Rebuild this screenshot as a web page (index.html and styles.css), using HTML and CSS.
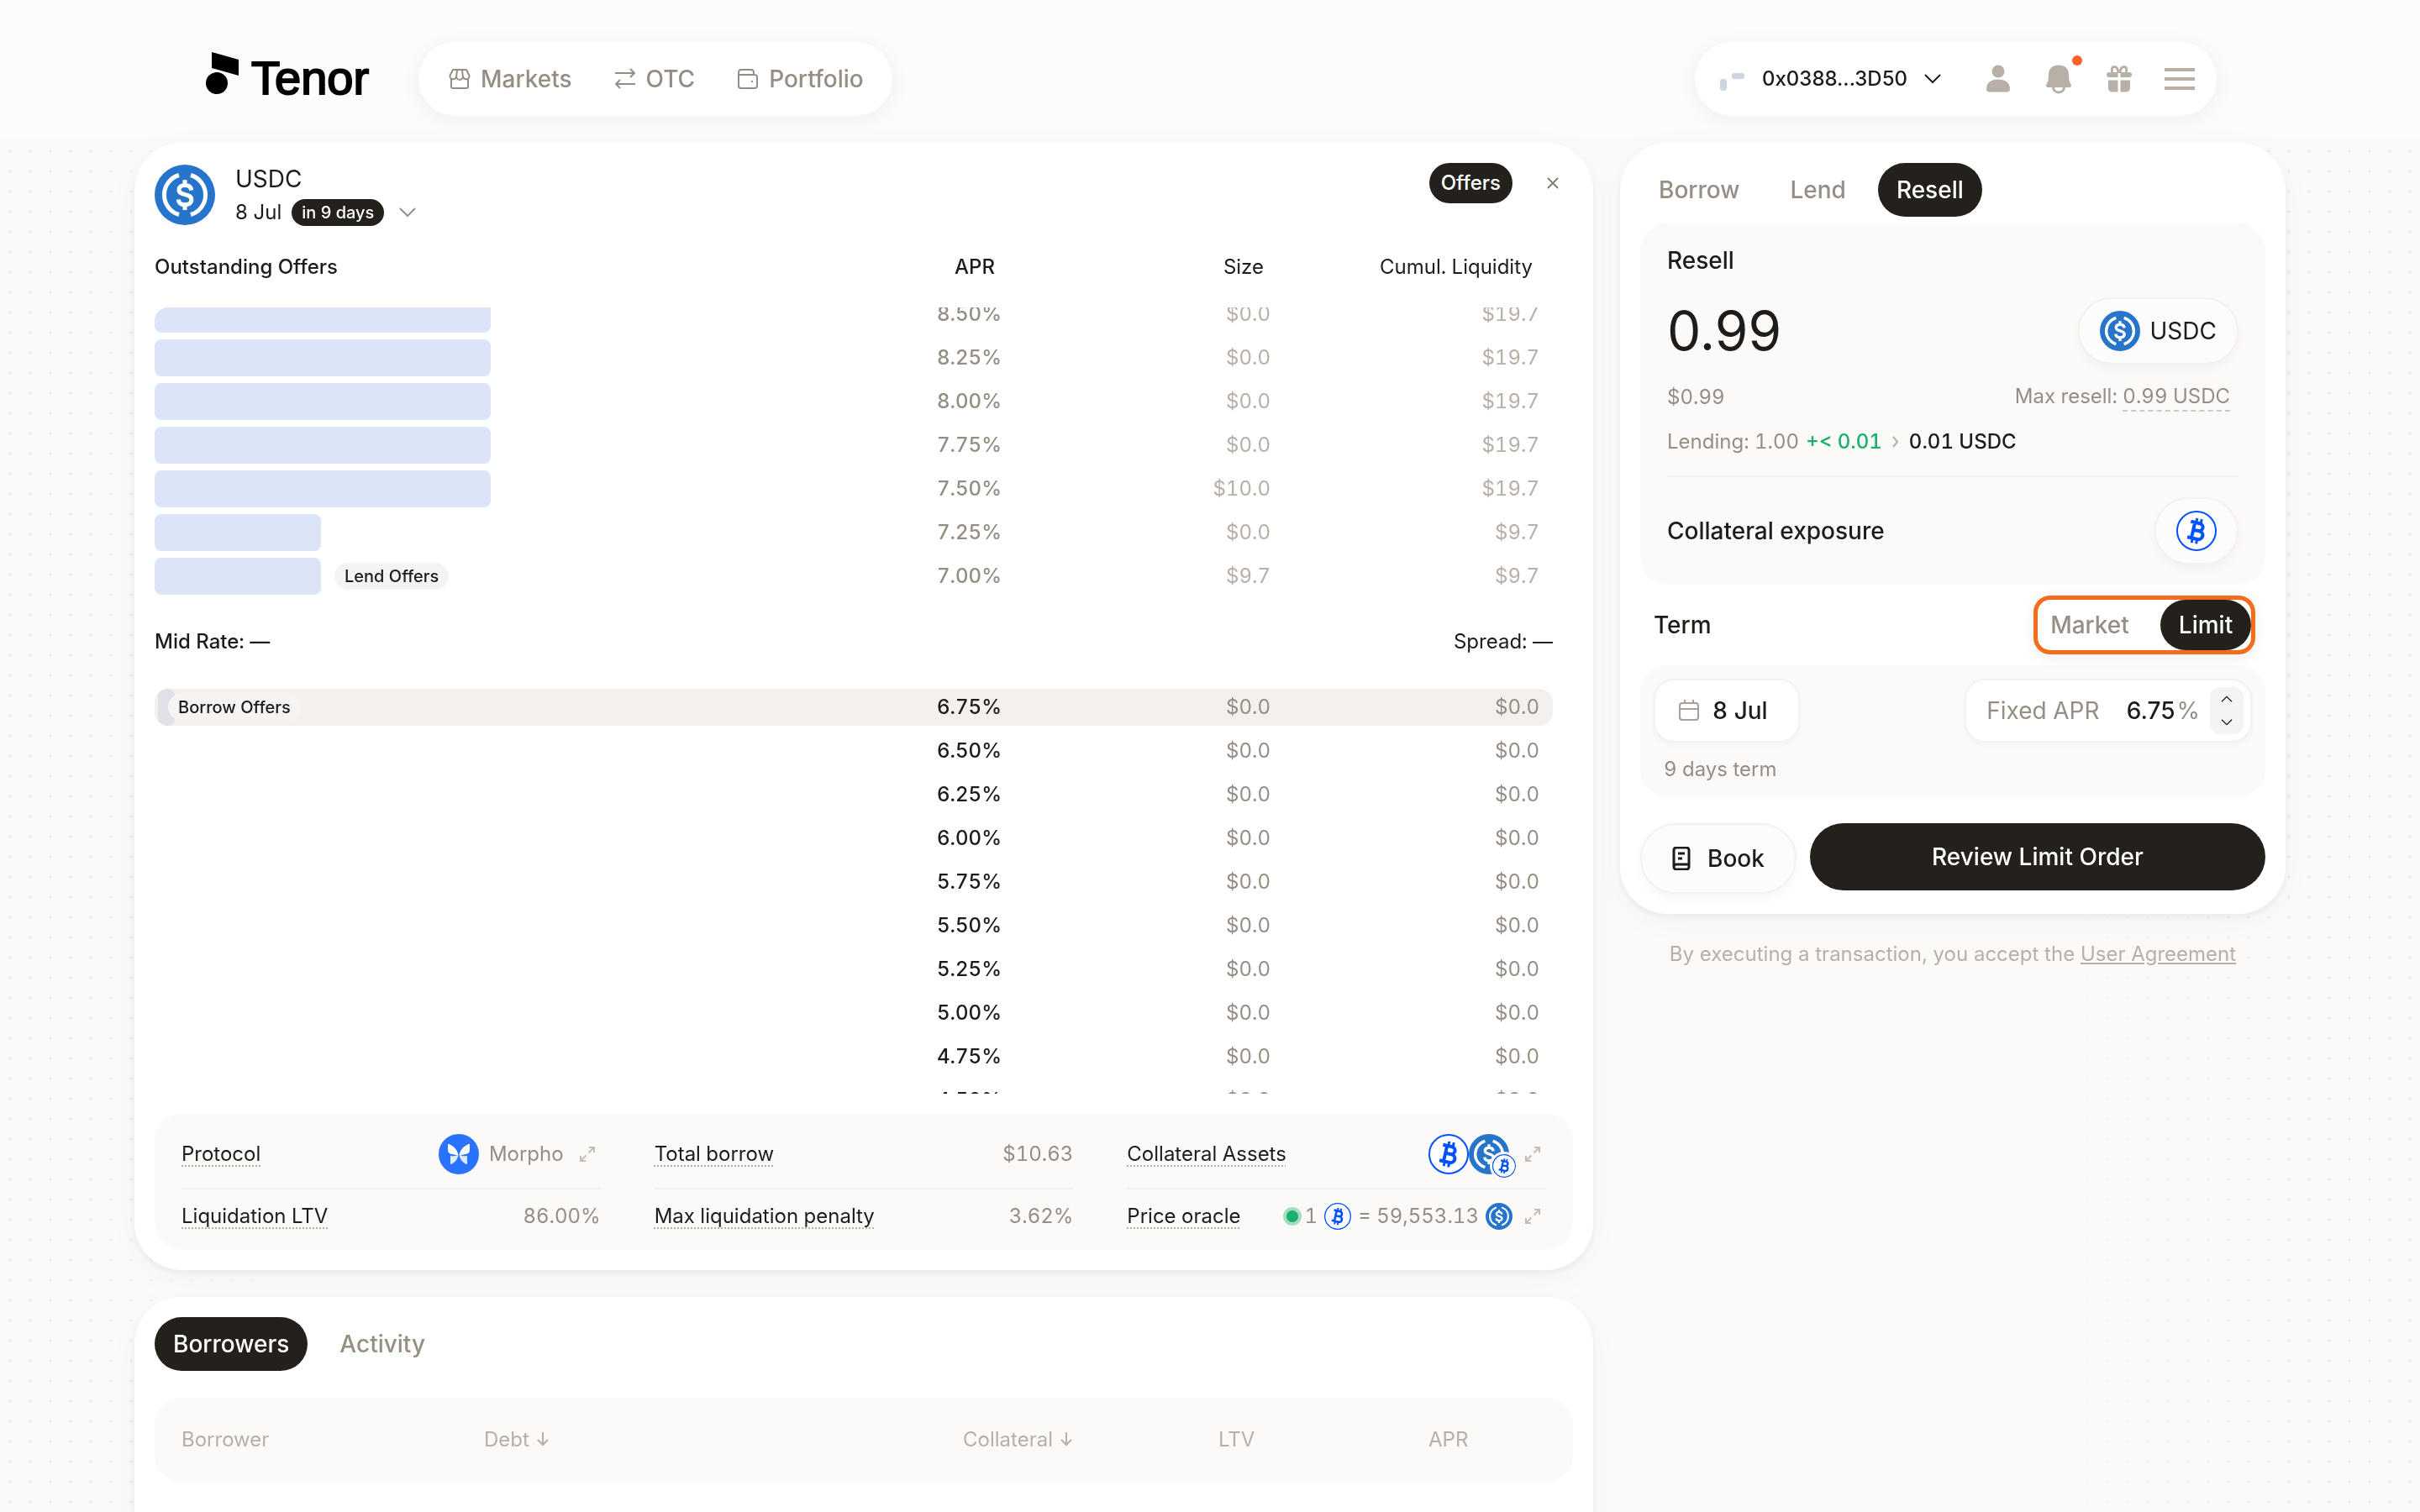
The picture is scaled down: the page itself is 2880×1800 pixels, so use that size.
FILE: index.html
```html
<!DOCTYPE html>
<html lang="en">
<head>
    <meta charset="UTF-8">
    <meta name="viewport" content="width=device-width, initial-scale=1.0">
    <title>Tenor - USDC 8 Jul</title>
    <link rel="stylesheet" href="styles.css">
</head>
<body>
    <!-- shared icons -->
    <svg class="sprite" aria-hidden="true">
        <symbol id="usdc" viewBox="0 0 72 72">
            <circle cx="36" cy="36" r="36" fill="#2775ca"/>
            <g fill="none" stroke="#fff" stroke-width="5">
                <path d="M29 12.5a24.5 24.5 0 0 0 0 47M43 12.5a24.5 24.5 0 0 1 0 47"/>
                <path d="M43.7 30.5c-.4-3.9-3.2-6-7.5-6-4.5 0-7.2 2.2-7.2 5.5 0 7.9 14.8 3.4 14.8 11.8 0 3.8-3 6-7.6 6-4.9 0-7.6-2.3-8-6.3M36 18.3v6.2M36 47.8V54"/>
            </g>
        </symbol>
        <symbol id="btc" viewBox="0 0 48 48">
            <circle cx="24" cy="24" r="23" fill="#fff" stroke="#0052ff" stroke-width="2"/>
            <g transform="rotate(13 24 24)" fill="none" stroke="#0052ff" stroke-width="4">
                <path d="M15 14.5h11a4.5 4.5 0 0 1 0 9h-6M20 23.5h7.5a5 5 0 0 1 0 10H15M20 14v20"/>
                <path d="M21.5 9v5M27 9v5M21.5 34v5M27 34v5" stroke-width="3"/>
            </g>
        </symbol>
        <symbol id="expand" viewBox="0 0 20 20">
            <path d="M12 2h6v6M18 2l-6.500 6.500M8 18H2v-6M2 18l6.500-6.500" fill="none" stroke="currentColor" stroke-width="2"/>
        </symbol>
        <symbol id="chevron" viewBox="0 0 20 12">
            <path d="M1 1l9 9 9-9" fill="none" stroke="currentColor" stroke-width="2"/>
        </symbol>
        <symbol id="arrow-down" viewBox="0 0 14 18">
            <path d="M7 1v15M1 10l6 6 6-6" fill="none" stroke="currentColor" stroke-width="2"/>
        </symbol>
    </svg>

    <header class="topbar">
        <div class="topbar-inner">
            <a class="logo" href="#">
                <svg width="40" height="52" viewBox="0 0 40 52"><circle cx="13" cy="38" r="13"/><path d="M7 1l32 9v19L7 20z"/></svg>
                <span>Tenor</span>
            </a>
            <nav class="pill-nav">
                <a href="#">
                    <svg width="26" height="26" viewBox="0 0 26 26"><path d="M5 2h16l3.500 7a3.800 3.800 0 0 1-7.600 1 3.900 3.900 0 0 1-7.800 0 3.800 3.800 0 0 1-7.600-1zM9.100 10l1-8M16.900 10l-1-8M3 13v9a2 2 0 0 0 2 2h16a2 2 0 0 0 2-2v-9"/></svg>
                    Markets
                </a>
                <a href="#">
                    <svg width="26" height="26" viewBox="0 0 26 26"><path d="M1 6h23M19 1l5 5-5 5M25 19H2M7 14l-5 5 5 5"/></svg>
                    OTC
                </a>
                <a href="#">
                    <svg width="26" height="26" viewBox="0 0 26 26"><path d="M20 8V5a3 3 0 0 0-3-3H5a3 3 0 0 0-3 3v16a3 3 0 0 0 3 3h16a3 3 0 0 0 3-3V11a3 3 0 0 0-3-3H2M18 15v2"/></svg>
                    Portfolio
                </a>
            </nav>
            <div class="account">
                <button class="wallet" type="button">
                    <svg class="avatar" width="34" height="34" viewBox="0 0 34 34"><rect x="4" y="17" width="8" height="14" rx="3"/><rect x="18" y="10" width="15" height="7" rx="3"/></svg>
                    0x0388...3D50
                    <svg width="20" height="12"><use href="#chevron"/></svg>
                </button>
                <button type="button" aria-label="Profile">
                    <svg width="36" height="36" viewBox="0 0 36 36"><circle cx="18" cy="9" r="7.500"/><path d="M4 30c0-8 6-11.500 14-11.500S32 22 32 30c0 2-1.500 3.500-3.500 3.500h-21C5.500 33.500 4 32 4 30z"/></svg>
                </button>
                <button class="bell" type="button" aria-label="Notifications">
                    <svg width="36" height="36" viewBox="0 0 36 36"><path d="M18 1.500c7 0 11.500 4 12 10.500l.500 8 2.300 5c.6 1.500-.4 3-2 3H5.200c-1.600 0-2.600-1.500-2-3L5.500 20l.5-8C6.500 5.500 11 1.500 18 1.500z"/><path class="clapper" d="M11.500 28a6.500 6 0 0 0 13 0"/></svg>
                    <span class="dot"></span>
                </button>
                <button type="button" aria-label="Rewards">
                    <svg width="36" height="36" viewBox="0 0 36 36"><path d="M6 10h24a3 3 0 0 1 0 6H19.500v-5h-3v5H6a3 3 0 0 1 0-6zM5 19.500h11.500v14H9.500A4.500 4.500 0 0 1 5 29zM19.500 19.500H31V29a4.500 4.500 0 0 1-4.500 4.500h-7z"/><path class="clapper" d="M17 10c-.500-4-2.500-6.500-5-6.500S8.500 7 10 10M19 10c.500-4 2.500-6.500 5-6.500S27.500 7 26 10"/></svg>
                </button>
                <button type="button" aria-label="Menu">
                    <svg width="36" height="36" viewBox="0 0 36 36"><path d="M0 5h36v4H0zM0 16h36v4H0zM0 27h36v4H0z"/></svg>
                </button>
            </div>
        </div>
    </header>

    <main class="layout">
        <div class="column">
            <section class="card">
                <div class="market-head">
                    <svg width="72" height="72"><use href="#usdc"/></svg>
                    <div class="market-title">
                        <h1>USDC</h1>
                        <button class="maturity" type="button">
                            8 Jul <span class="badge">in 9 days</span>
                            <svg width="20" height="12"><use href="#chevron"/></svg>
                        </button>
                    </div>
                    <div class="market-actions">
                        <button class="chip" type="button">Offers</button>
                        <button class="close" type="button" aria-label="Close">
                            <svg width="16" height="16" viewBox="0 0 16 16"><path d="M2 2l12 12M14 2L2 14" stroke="currentColor" stroke-width="2"/></svg>
                        </button>
                    </div>
                </div>

                <table class="book">
                    <thead>
                        <tr><th>Outstanding Offers</th><th>APR</th><th>Size</th><th>Cumul. Liquidity</th></tr>
                    </thead>
                    <tbody>
                        <tr class="lend"><td><span class="bar"></span></td><td>8.50%</td><td>$0.0</td><td>$19.7</td></tr>
                        <tr class="lend"><td><span class="bar"></span></td><td>8.25%</td><td>$0.0</td><td>$19.7</td></tr>
                        <tr class="lend"><td><span class="bar"></span></td><td>8.00%</td><td>$0.0</td><td>$19.7</td></tr>
                        <tr class="lend"><td><span class="bar"></span></td><td>7.75%</td><td>$0.0</td><td>$19.7</td></tr>
                        <tr class="lend"><td><span class="bar"></span></td><td>7.50%</td><td>$10.0</td><td>$19.7</td></tr>
                        <tr class="lend"><td><span class="bar short"></span></td><td>7.25%</td><td>$0.0</td><td>$9.7</td></tr>
                        <tr class="lend"><td><span class="bar short"></span><span class="tag">Lend Offers</span></td><td>7.00%</td><td>$9.7</td><td>$9.7</td></tr>
                        <tr class="mid"><td>Mid Rate: —</td><td>Spread: —</td></tr>
                        <tr class="active"><td><span class="bar stub"></span><span class="tag">Borrow Offers</span></td><td>6.75%</td><td>$0.0</td><td>$0.0</td></tr>
                        <tr><td></td><td>6.50%</td><td>$0.0</td><td>$0.0</td></tr>
                        <tr><td></td><td>6.25%</td><td>$0.0</td><td>$0.0</td></tr>
                        <tr><td></td><td>6.00%</td><td>$0.0</td><td>$0.0</td></tr>
                        <tr><td></td><td>5.75%</td><td>$0.0</td><td>$0.0</td></tr>
                        <tr><td></td><td>5.50%</td><td>$0.0</td><td>$0.0</td></tr>
                        <tr><td></td><td>5.25%</td><td>$0.0</td><td>$0.0</td></tr>
                        <tr><td></td><td>5.00%</td><td>$0.0</td><td>$0.0</td></tr>
                        <tr><td></td><td>4.75%</td><td>$0.0</td><td>$0.0</td></tr>
                        <tr><td></td><td>4.50%</td><td>$0.0</td><td>$0.0</td></tr>
                    </tbody>
                </table>

                <dl class="stats">
                    <div class="top">
                        <dt>Protocol</dt>
                        <dd>
                            <svg width="48" height="48" viewBox="0 0 48 48"><circle cx="24" cy="24" r="24" fill="#2973ff"/><path d="M11 12.500c0-.8.800-1 1.500-.5C19 15 22 19 23.500 25c-2 .5-4.500-.5-8-1-3-.5-4.500-2.500-4.500-5zM37 12.500c0-.8-.8-1-1.500-.5C29 15 26 19 24.500 25c2 .5 4.500-.5 8-1 3-.5 4.500-2.500 4.500-5z" fill="#fff"/><path d="M14 26c4 1 7-.5 9.500-1-1 5-3.500 8-8 10.800-.8.500-1.500.2-1.500-.6zM34 26c-4 1-7-.5-9.500-1 1 5 3.500 8 8 10.800.8.500 1.500.2 1.500-.6z" fill="#fff" opacity=".85"/></svg>
                            <span class="protocol">Morpho</span>
                            <svg class="expand" width="20" height="20"><use href="#expand"/></svg>
                        </dd>
                    </div>
                    <div class="top"><dt>Total borrow</dt><dd>$10.63</dd></div>
                    <div class="top">
                        <dt>Collateral Assets</dt>
                        <dd>
                            <span class="coins">
                                <svg width="48" height="48"><use href="#btc"/></svg>
                                <svg width="48" height="48"><use href="#usdc"/></svg>
                                <svg class="coin-badge" width="28" height="28"><use href="#btc"/></svg>
                            </span>
                            <svg class="expand" width="20" height="20"><use href="#expand"/></svg>
                        </dd>
                    </div>
                    <div><dt>Liquidation LTV</dt><dd>86.00%</dd></div>
                    <div><dt>Max liquidation penalty</dt><dd>3.62%</dd></div>
                    <div>
                        <dt>Price oracle</dt>
                        <dd class="oracle">
                            <span class="live"></span>
                            <span>1</span>
                            <svg width="32" height="32"><use href="#btc"/></svg>
                            <span>= 59,553.13</span>
                            <svg width="32" height="32"><use href="#usdc"/></svg>
                            <svg class="expand" width="20" height="20"><use href="#expand"/></svg>
                        </dd>
                    </div>
                </dl>
            </section>

            <section class="card positions">
                <div class="tabs">
                    <button class="selected" type="button">Borrowers</button>
                    <button type="button">Activity</button>
                </div>
                <table class="borrowers">
                    <thead>
                        <tr>
                            <th>Borrower</th>
                            <th>Debt <svg width="14" height="18"><use href="#arrow-down"/></svg></th>
                            <th>Collateral <svg width="14" height="18"><use href="#arrow-down"/></svg></th>
                            <th>LTV</th>
                            <th>APR</th>
                        </tr>
                    </thead>
                </table>
            </section>
        </div>

        <aside class="side">
            <form class="card order">
                <div class="tabs">
                    <button type="button">Borrow</button>
                    <button type="button">Lend</button>
                    <button class="selected" type="button">Resell</button>
                </div>

                <div class="panel amount">
                    <label for="amount">Resell</label>
                    <div class="line amount-line">
                        <input id="amount" type="text" value="0.99">
                        <button class="token" type="button"><svg width="48" height="48"><use href="#usdc"/></svg>USDC</button>
                    </div>
                    <div class="line note">
                        <span>$0.99</span>
                        <span class="max">Max resell: <button type="button">0.99 USDC</button></span>
                    </div>
                    <div class="note lending">
                        <span>Lending: 1.00</span>
                        <span class="gain">+&lt; 0.01</span>
                        <svg width="8" height="14" viewBox="0 0 8 14"><path d="M1 1l5 6-5 6" fill="none" stroke="#b8b0a7" stroke-width="2"/></svg>
                        <span class="total">0.01 USDC</span>
                    </div>
                    <div class="line exposure">
                        <span>Collateral exposure</span>
                        <button class="token" type="button" aria-label="Collateral asset"><svg width="48" height="48"><use href="#btc"/></svg></button>
                    </div>
                </div>

                <div class="line term">
                    <span>Term</span>
                    <div class="switch">
                        <button type="button">Market</button>
                        <button class="selected" type="button">Limit</button>
                    </div>
                </div>

                <div class="panel rate">
                    <div class="line">
                        <button class="field date" type="button">
                            <svg width="24" height="28" viewBox="0 0 24 28"><path d="M1 8a3 3 0 0 1 3-3h16a3 3 0 0 1 3 3v14a3 3 0 0 1-3 3H4a3 3 0 0 1-3-3zM1 12h22M7 1v5M17 1v5"/></svg>
                            8 Jul
                        </button>
                        <div class="field apr">
                            <label for="apr">Fixed APR</label>
                            <input id="apr" type="text" value="6.75">
                            <span>%</span>
                            <div class="stepper">
                                <button type="button" aria-label="Increase"><svg class="up" width="14" height="8"><use href="#chevron"/></svg></button>
                                <button type="button" aria-label="Decrease"><svg width="14" height="8"><use href="#chevron"/></svg></button>
                            </div>
                        </div>
                    </div>
                    <p>9 days term</p>
                </div>

                <div class="actions">
                    <button class="book-btn" type="button">
                        <svg width="22" height="28" viewBox="0 0 22 28"><path d="M2 4a3 3 0 0 1 3-3h12a3 3 0 0 1 3 3v20a3 3 0 0 1-3 3H5a3 3 0 0 1-3-3zM2 24a3 3 0 0 1 3-3h15M7 8h8M7 14h5"/></svg>
                        Book
                    </button>
                    <button class="submit" type="submit">Review Limit Order</button>
                </div>
            </form>
            <p class="legal">By executing a transaction, you accept the <a href="#">User Agreement</a></p>
        </aside>
    </main>
</body>
</html>
```

FILE: styles.css
```css
* {
    box-sizing: border-box;
}
body {
    margin: 0;
    background: #fbfaf8;
    color: #1f1b18;
    font-family: Inter, "Liberation Sans", sans-serif;
    font-size: 24px;
    line-height: 32px;
}
/* dotted backdrop, fading towards the middle */
body::before {
    content: "";
    position: fixed;
    inset: 0;
    z-index: -1;
    background: radial-gradient(circle, #e9e8e6 2px, transparent 2px) 0 0 / 24px 24px;
    mask-image: linear-gradient(to right, #000, transparent 12%, transparent 85%, #000);
}
h1, p, dl, dd {
    margin: 0;
}
button, input {
    font: inherit;
    color: inherit;
    background: none;
    border: 0;
    padding: 0;
}
button {
    cursor: pointer;
}
a {
    color: inherit;
    text-decoration: none;
}
svg {
    display: block;
    flex: none;
}
.sprite {
    position: absolute;
    width: 0;
    height: 0;
}

/* top bar */
.topbar {
    background: #fcfafb;
    padding: 50px 240px 26px;
}
.topbar-inner {
    display: flex;
    align-items: center;
    max-width: 2396px;
    margin: 0 auto;
}
.logo {
    display: flex;
    align-items: center;
    gap: 14px;
    width: 256px;
    padding: 0 0 2px 3px;
    color: #000;
    font-family: "Liberation Sans", Arial, sans-serif;
    font-size: 56px;
    line-height: 64px;
    -webkit-text-stroke: 2px #000;
}
.logo svg {
    margin-bottom: 12px;
}
.pill-nav, .account {
    display: flex;
    align-items: center;
    height: 88px;
    border-radius: 44px;
    background: #fff;
    box-shadow: 0 4px 24px rgba(60, 40, 50, 0.05);
}
.pill-nav {
    gap: 50px;
    padding: 0 34px 0 36px;
    color: #968e85;
    font-size: 28px;
    font-weight: 500;
}
.pill-nav a {
    display: flex;
    align-items: center;
    gap: 12px;
}
.pill-nav svg {
    fill: none;
    stroke: currentColor;
    stroke-width: 2;
    stroke-linejoin: round;
}
.account {
    gap: 36px;
    margin-left: auto;
    padding: 0 26px;
    color: #b8b0a7;
}
.account svg {
    fill: currentColor;
}
.account .avatar {
    fill: #cbd5e3;
}
.account .clapper {
    fill: none;
    stroke: currentColor;
    stroke-width: 3;
}
.account .wallet {
    display: flex;
    align-items: center;
    gap: 20px;
    margin-right: 14px;
    color: #1f1b18;
    font-weight: 500;
}
.bell {
    position: relative;
}
.bell .dot {
    position: absolute;
    top: -10px;
    right: -10px;
    width: 12px;
    height: 12px;
    border-radius: 50%;
    background: #ff6224;
}

/* page columns */
.layout {
    display: grid;
    grid-template-columns: minmax(0, 1736fr) minmax(0, 792fr);
    align-items: start;
    gap: 32px;
    max-width: 2560px;
    margin: 6px auto 0;
}
.column {
    display: grid;
    gap: 32px;
}
.card {
    padding: 24px;
    border-radius: 56px;
    background: #fff;
    box-shadow: 0 4px 8px rgba(30, 30, 40, 0.06), 0 8px 40px rgba(40, 30, 20, 0.03);
}
.panel {
    border-radius: 32px;
    background: #fbfaf9;
}
.line {
    display: flex;
    align-items: center;
    justify-content: space-between;
}

/* market header */
.market-head {
    display: flex;
    align-items: center;
    height: 76px;
    gap: 24px;
}
.market-title h1 {
    margin-bottom: 6px;
    font-size: 28px;
    font-weight: 400;
    line-height: 36px;
}
.maturity {
    display: flex;
    align-items: center;
    gap: 12px;
}
.maturity svg {
    margin-left: 6px;
    color: #968e85;
}
.badge, .tag {
    border-radius: 16px;
    padding: 0 12px;
    font-size: 20px;
    font-weight: 500;
}
.badge {
    background: #24211c;
    color: #fff;
}
.tag {
    background: #f5f4f2;
    margin-left: 16px;
}
.market-actions {
    display: flex;
    align-items: center;
    align-self: flex-start;
    gap: 40px;
    margin-left: auto;
    padding-right: 16px;
}
.chip {
    height: 48px;
    padding: 0 14px;
    border-radius: 24px;
    background: #24211c;
    color: #fff;
    font-weight: 500;
}
.close {
    color: #857e76;
}

/* order book */
.book {
    display: block;
    padding-right: 24px;
    font-variant-numeric: tabular-nums;
}
.book thead, .book tbody {
    display: block;
}
.book tr {
    display: grid;
    grid-template-columns: minmax(0, 1fr) repeat(3, 320px);
    align-items: center;
    height: 44px;
    margin: 4px 0 8px;
    padding-right: 16px;
    border-radius: 16px;
}
.book thead tr {
    height: 96px;
    margin: 0;
    padding-right: 24px;
}
.book tbody {
    height: 936px;
    overflow: hidden;
    border-top-left-radius: 16px;
}
.book tbody tr:first-child {
    margin-top: -14px;
}
.book th, .book td {
    padding: 0;
    font-weight: 400;
    text-align: right;
    color: #968e85;
}
.book th {
    color: #1f1b18;
}
.book th:first-child {
    text-align: left;
    font-weight: 500;
}
.book th:nth-child(2) {
    font-weight: 500;
}
.book td:first-child {
    display: flex;
    align-items: center;
    color: #1f1b18;
}
.book td:nth-child(2) {
    color: #1f1b18;
    font-weight: 500;
}
.book .lend td {
    color: #b8b0a7;
}
.book .lend td:nth-child(2) {
    color: #968e85;
}
.book .lend td:first-child {
    color: #1f1b18;
}
.bar {
    width: 400px;
    height: 44px;
    border-radius: 8px;
    background: #dce4f7;
}
.bar.short {
    width: 198px;
}
.bar.stub {
    width: 20px;
    margin-left: 4px;
    border-radius: 8px;
    background: #dfe1e6;
}
.stub + .tag {
    margin-left: -8px;
}
.book .active {
    background: #f4f0ed;
    overflow: hidden;
}
.book .mid {
    grid-template-columns: 1fr 1fr;
    height: 104px;
    margin: -4px 0 -4px;
    padding-right: 0;
}
.book .mid + tr {
    margin-top: 8px;
}
.book .mid td:nth-child(2) {
    font-weight: 400;
}
.book .mid td:first-child {
    font-weight: 500;
}

/* market stats */
.stats {
    display: grid;
    grid-template-columns: repeat(3, minmax(0, 1fr));
    column-gap: 64px;
    margin-top: 24px;
    padding: 24px 32px;
    border-radius: 32px;
    background: #fbfaf9;
    font-variant-numeric: tabular-nums;
}
.stats > div {
    display: flex;
    align-items: center;
    justify-content: space-between;
    padding-top: 16px;
}
.stats > .top {
    height: 66px;
    padding: 0 0 16px;
    border-bottom: 2px solid #f2f1ef;
}
.stats dt {
    text-decoration: underline dotted #b8b0a7 2px;
    text-underline-offset: 5px;
}
.stats dd {
    display: flex;
    align-items: center;
    gap: 12px;
    color: #968e85;
}
.stats .expand {
    margin: 0 6px;
    color: #c4bdb5;
}
.stats .oracle {
    gap: 8px;
}
.stats .coins {
    display: flex;
    position: relative;
}
.coin-badge {
    position: absolute;
    right: -8px;
    bottom: -4px;
    border-radius: 50%;
    box-shadow: 0 0 0 3px #fbfaf9;
}
.live {
    width: 22px;
    height: 22px;
    margin-right: -4px;
    border: 4px solid #a5dcc1;
    border-radius: 50%;
    background: #1bb06b;
}

/* tabs */
.tabs {
    display: flex;
    gap: 16px;
}
.tabs button {
    height: 64px;
    padding: 0 22px;
    border-radius: 32px;
    color: #968e85;
    font-size: 28px;
    font-weight: 500;
}
.tabs .selected {
    background: #24211c;
    color: #fff;
}

/* borrowers */
.positions {
    min-height: 400px;
}
.borrowers {
    width: 100%;
    margin-top: 32px;
    table-layout: fixed;
    border-spacing: 0;
}
.borrowers th {
    height: 100px;
    padding: 0;
    background: #fbfaf9;
    color: #b8b0a7;
    font-weight: 400;
    text-align: left;
}
.borrowers th:first-child {
    width: 392px;
    padding-left: 32px;
    border-radius: 32px 0 0 32px;
}
.borrowers th:nth-child(2) {
    width: 570px;
}
.borrowers th:nth-child(3) {
    width: 304px;
}
.borrowers th:nth-child(4) {
    width: 250px;
}
.borrowers th:last-child {
    border-radius: 0 32px 32px 0;
}
.borrowers svg {
    display: inline-block;
    margin-left: 2px;
}

/* order form */
.order {
    font-variant-numeric: tabular-nums;
}
.amount {
    margin-top: 8px;
    padding: 24px 32px;
    font-size: 28px;
    font-weight: 500;
}
.amount label {
    display: block;
    line-height: 40px;
}
.amount-line {
    height: 80px;
    margin-top: 24px;
}
#amount {
    width: 320px;
    font-size: 64px;
    font-weight: 400;
    font-variant-numeric: normal;
    line-height: 80px;
}
.token {
    display: flex;
    align-items: center;
    gap: 12px;
    height: 80px;
    padding: 0 24px;
    border: 2px solid #f5f1ef;
    border-radius: 40px;
    background: #fcfcfc;
    box-shadow: 0 6px 12px rgba(30, 20, 10, 0.04);
}
.amount-line .token {
    font-weight: 400;
}
.note {
    margin-top: 22px;
    color: #968e85;
    font-size: 24px;
    font-weight: 400;
}
.max {
    padding-right: 10px;
}
.max button {
    border-bottom: 2px dashed #cfcac4;
    line-height: 32px;
}
.lending {
    display: flex;
    align-items: center;
    gap: 8px;
    height: 72px;
    margin-top: 0;
}
.lending svg {
    margin: 0 4px;
}
.gain {
    color: #1bb06b;
    font-weight: 500;
}
.total {
    color: #1f1b18;
    font-weight: 500;
}
.exposure {
    margin-top: 4px;
    padding-top: 24px;
    border-top: 2px solid #f2f1ef;
}
.term {
    height: 96px;
    padding: 0 12px 0 16px;
    font-size: 28px;
    font-weight: 500;
}
.switch {
    display: flex;
    height: 70px;
    border: 5px solid #f36c1e;
    border-radius: 20px;
    box-shadow: 0 4px 16px rgba(30, 20, 10, 0.08);
    color: #968e85;
}
.switch button {
    width: 108px;
    border-radius: 30px;
}
.switch button:first-child {
    width: 124px;
    margin-right: 22px;
}
.switch .selected {
    background: #24211c;
    color: #fff;
}
.rate {
    height: 156px;
    padding: 16px;
    font-size: 28px;
}
.rate p {
    margin-top: 16px;
    padding-left: 12px;
    color: #968e85;
    font-size: 24px;
}
.field {
    display: flex;
    align-items: center;
    height: 76px;
    border: 2px solid #f5f1ef;
    border-radius: 24px;
    background: #fff;
    box-shadow: 0 3px 6px rgba(30, 20, 10, 0.03);
}
.date {
    gap: 16px;
    padding: 0 36px 0 28px;
    font-weight: 500;
}
.date svg {
    fill: none;
    stroke: #a8a098;
    stroke-width: 2;
}
.apr {
    padding: 0 8px 0 24px;
}
.apr label, .apr > span {
    color: #968e85;
}
#apr {
    width: 62px;
    margin: 0 2px 0 28px;
    font-weight: 500;
    font-variant-numeric: normal;
    text-align: right;
}
.stepper {
    display: grid;
    margin-left: 12px;
    border-radius: 12px;
    background: #f5f4f2;
}
.stepper button {
    display: grid;
    place-items: center;
    width: 40px;
    height: 28px;
}
.stepper .up {
    transform: rotate(180deg);
}
.actions {
    display: flex;
    align-items: flex-start;
    gap: 16px;
    margin-top: 32px;
    font-size: 28px;
    font-weight: 500;
}
.book-btn {
    display: flex;
    align-items: center;
    gap: 20px;
    height: 84px;
    padding: 0 36px;
    border: 2px solid #f5f1ef;
    border-radius: 42px;
    background: #fcfcfc;
    box-shadow: 0 6px 12px rgba(30, 20, 10, 0.04);
}
.book-btn svg {
    fill: none;
    stroke: currentColor;
    stroke-width: 3;
}
.submit {
    flex: 1;
    height: 80px;
    border-radius: 40px;
    background: #24211c;
    color: #fff;
}
.legal {
    margin-top: 32px;
    color: #b8b0a7;
    text-align: center;
}
.legal a {
    text-decoration: underline;
}
```
